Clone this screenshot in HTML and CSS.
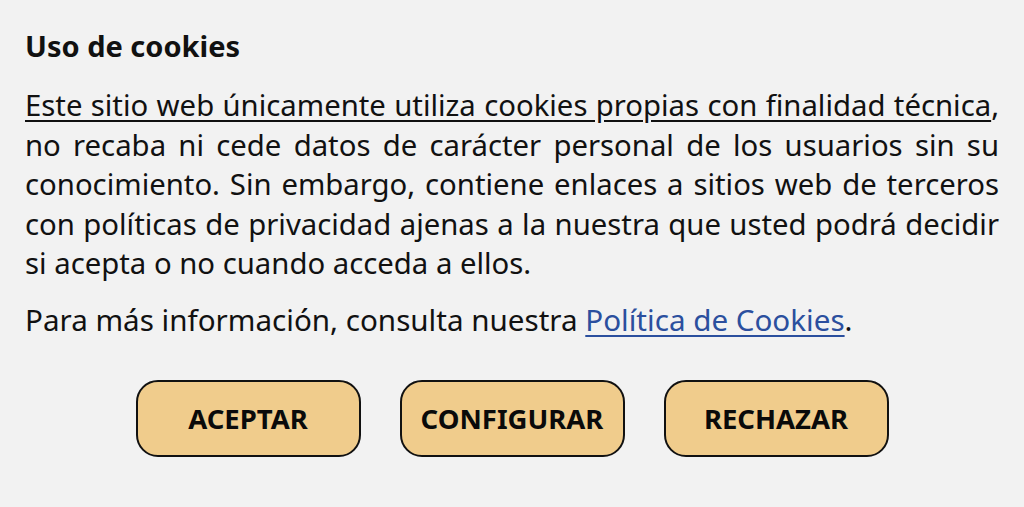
FILE: index.html
```html
<!DOCTYPE html>
<html lang="es">
<head>
    <meta charset="UTF-8">
    <meta name="viewport" content="width=device-width, initial-scale=1.0">
    <title>Uso de cookies</title>
    <link rel="stylesheet" href="styles.css">
</head>
<body>

    <div class="cookie-panel">
        <h2>Uso de cookies</h2>

        <p class="cookie-text">
            <u>Este sitio web únicamente utiliza cookies propias con finalidad técnica</u>,
            no recaba ni cede datos de carácter personal de los usuarios sin su conocimiento.
            Sin embargo, contiene enlaces a sitios web de terceros con políticas de privacidad
            ajenas a la nuestra que usted podrá decidir si acepta o no cuando acceda a ellos.
        </p>

        <p class="cookie-more">
            Para más información, consulta nuestra <a href="#">Política de Cookies</a>.
        </p>

        <div class="button-row">
            <button class="btn-cookie">ACEPTAR</button>
            <button class="btn-cookie">CONFIGURAR</button>
            <button class="btn-cookie">RECHAZAR</button>
        </div>
    </div>

</body>
</html>
```

FILE: styles.css
```css
/* Basic Reset */
* {
    margin: 0;
    padding: 0;
    box-sizing: border-box;
}

body {
    font-family: 'Noto Sans', 'Open Sans', sans-serif;
    background-color: #f2f2f2;
    color: #111111;
}

/* Panel */
.cookie-panel {
    padding: 26px 25px 20px;
}

h2 {
    font-size: 29px;
    font-weight: 700;
    line-height: 40px;
    margin-bottom: 20px;
}

.cookie-text {
    font-size: 29.3px;
    line-height: 39.5px;
    text-align: justify;
    margin-bottom: 16px;
}

.cookie-text u {
    text-underline-offset: 4px;
}

.cookie-more {
    font-size: 29.6px;
    line-height: 39.5px;
}

.cookie-more a {
    color: #2b4f9e;
    text-underline-offset: 4px;
}

/* Buttons */
.button-row {
    display: flex;
    justify-content: center;
    gap: 39px;
    margin-top: 41px;
}

.btn-cookie {
    width: 225px;
    height: 77px;
    background-color: #f0cc8c;
    border: 2px solid #111111;
    border-radius: 22px;
    font-family: 'Noto Sans', 'Open Sans', sans-serif;
    font-size: 27.5px;
    font-weight: 700;
    color: #0a0a0a;
    cursor: pointer;
}
```
